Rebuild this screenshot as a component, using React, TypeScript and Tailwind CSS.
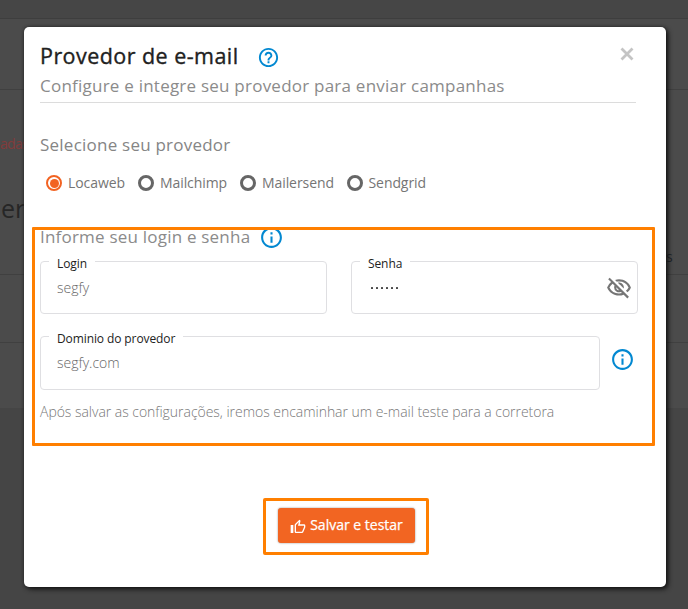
import type { ReactNode } from "react";
import {
  MdHelpOutline,
  MdInfoOutline,
  MdOutlineThumbUp,
  MdOutlineVisibilityOff,
} from "react-icons/md";

function PageBehind() {
  return (
    <div className="flex h-full w-full flex-col bg-[#4b4b4b]">
      <div className="h-[19px] border-b border-[#3e3e3e] bg-[#464646]" />
      <div className="h-[71px] border-b border-[#404040]" />
      <div className="flex h-[185px] flex-col border-b border-[#404040]">
        <div className="mt-[44px] h-5 text-[14px] leading-5 tracking-[-0.7px] text-[#823b3b]">adas</div>
        <div className="mt-[36px] h-9 pl-[1px] text-[25px] leading-9 text-[#262626]">er</div>
        <div className="mt-[21px] h-5 pl-[666px] text-[14px] leading-5 text-[#20252a]">s</div>
      </div>
      <div className="h-[68px] border-b border-[#404040]" />
      <div className="h-[65px]" />
      <div className="flex-1 bg-[#454545]" />
    </div>
  );
}

function Radio({ label, checked, className }: { label: string; checked?: boolean; className: string }) {
  return (
    <label className={`flex items-center ${className}`}>
      <span
        className={`flex size-4 items-center justify-center rounded-full ${
          checked ? "border-[2.5px] border-[#f26322]" : "border-[3px] border-[#666]"
        }`}
      >
        {checked && <span className="size-[9px] rounded-full bg-[#f26322]" />}
      </span>
      <span className="ml-[6px] whitespace-nowrap text-[14px] leading-5 tracking-[-0.08px] text-[#757575]">
        {label}
      </span>
    </label>
  );
}

function Field({ label, className, children }: { label: string; className: string; children: ReactNode }) {
  return (
    <fieldset className={`min-w-0 rounded-[4px] border border-[#dfdfe2] pl-2 ${className}`}>
      <legend className="h-3 whitespace-nowrap px-2 text-[12px] leading-3 tracking-[-0.1px] text-[#222]">
        <span className="relative top-[3px]">{label}</span>
      </legend>
      {children}
    </fieldset>
  );
}

export default function App() {
  return (
    <div className="relative h-[609px] w-[688px] overflow-hidden font-['Open_Sans',sans-serif]">
      <PageBehind />
      <div
        role="dialog"
        className="absolute left-[24px] top-[27px] flex h-[560px] w-[642px] flex-col rounded-[5px] bg-white pl-4 shadow-[2px_2px_5px_0px_#101010,0_0_3px_0px_#303030]"
      >
        <header className="mr-[30px] h-[76px] border-b border-[#dcdcdc]">
          <div className="flex h-[45px] items-start pt-[13px]">
            <h1 className="whitespace-nowrap text-[21.5px] leading-8 tracking-[0.45px] text-[#212121] [-webkit-text-stroke:0.35px_#212121]">
              Provedor de e-mail
            </h1>
            <MdHelpOutline className="ml-[18px] mt-[6px] size-[23px] text-[#0288d1]" />
            <button className="ml-auto mt-[5px] flex size-[18px] items-center justify-center">
              <svg viewBox="0 0 14 14" className="size-[14px] stroke-[#c4c4c4]" strokeWidth="2.8">
                <path d="M1.5 1.5 12.5 12.5M12.5 1.5 1.5 12.5" />
              </svg>
            </button>
          </div>
          <p className="mt-[2px] whitespace-nowrap text-[17px] leading-6 tracking-[0.23px] text-[#8b8b8b]">
            Configure e integre seu provedor para enviar campanhas
          </p>
        </header>

        <h2 className="mt-[30px] text-[17px] leading-6 tracking-[0.23px] text-[#858585]">Selecione seu provedor</h2>
        <div className="mt-[16px] flex h-5 pl-[6px]">
          <Radio label="Locaweb" checked className="w-[92px]" />
          <Radio label="Mailchimp" className="w-[102px]" />
          <Radio label="Mailersend" className="w-[106.5px]" />
          <Radio label="Sendgrid" className="w-[90px]" />
        </div>

        <section className="relative -ml-2 mt-[34px] h-[219px] w-[623px] pl-2">
          <div className="flex h-5 items-center">
            <h2 className="text-[17px] leading-5 tracking-[0.21px] text-[#8b8b8b]">Informe seu login e senha</h2>
            <MdInfoOutline className="ml-[9px] size-[25px] text-[#0288d1]" />
          </div>
          <div className="mt-[8px] flex gap-[24px]">
            <Field label="Login" className="h-[59px] w-[287px]">
              <div className="pl-2 pt-[11px] text-[14px] font-light leading-5 text-[#666]">segfy</div>
            </Field>
            <Field label="Senha" className="h-[59px] w-[287px]">
              <div className="mt-[6px] flex h-[28px] items-center justify-between pl-[10px] pr-[5px]">
                <span className="flex gap-[3px] pl-[1px] pt-px">
                  {[0, 1, 2, 3, 4, 5].map((i) => (
                    <span key={i} className="size-[2px] rounded-[0.5px] bg-[#444]" />
                  ))}
                </span>
                <MdOutlineVisibilityOff className="mt-px size-[26px] text-[#757575]" />
              </div>
            </Field>
          </div>
          <div className="mt-[16px] flex">
            <Field label="Dominio do provedor" className="h-[60px] w-[560px]">
              <div className="pl-2 pt-[11px] text-[14px] font-light leading-5 text-[#666]">segfy.com</div>
            </Field>
            <MdInfoOutline className="ml-[9.5px] mt-[17px] size-[25px] text-[#0288d1]" />
          </div>
          <p className="mt-[12px] whitespace-nowrap text-[14px] font-light leading-5 tracking-[-0.03px] text-[#777]">
            Após salvar as configurações, iremos encaminhar um e-mail teste para a corretora
          </p>
          <div className="pointer-events-none absolute inset-0 rounded-[1px] border-[3px] border-[#ff7f00]" />
        </section>

        <div className="ml-[223px] mt-[52px] flex h-[57px] w-[166px] items-start justify-center rounded-[2px] border-[3px] border-[#ff7f00] pl-[1px] pt-[7px]">
          <button className="flex h-[35px] w-[137px] items-center justify-center rounded-[3px] bg-[#f26522] text-[14px] leading-5 text-white shadow-[0_0_2px_#888] [-webkit-text-stroke:0.25px_#fff]">
            <MdOutlineThumbUp className="mr-1 mt-[2px] size-4 [-webkit-text-stroke:0]" />
            <span className="pb-[1px]">Salvar e testar</span>
          </button>
        </div>
      </div>
    </div>
  );
}
